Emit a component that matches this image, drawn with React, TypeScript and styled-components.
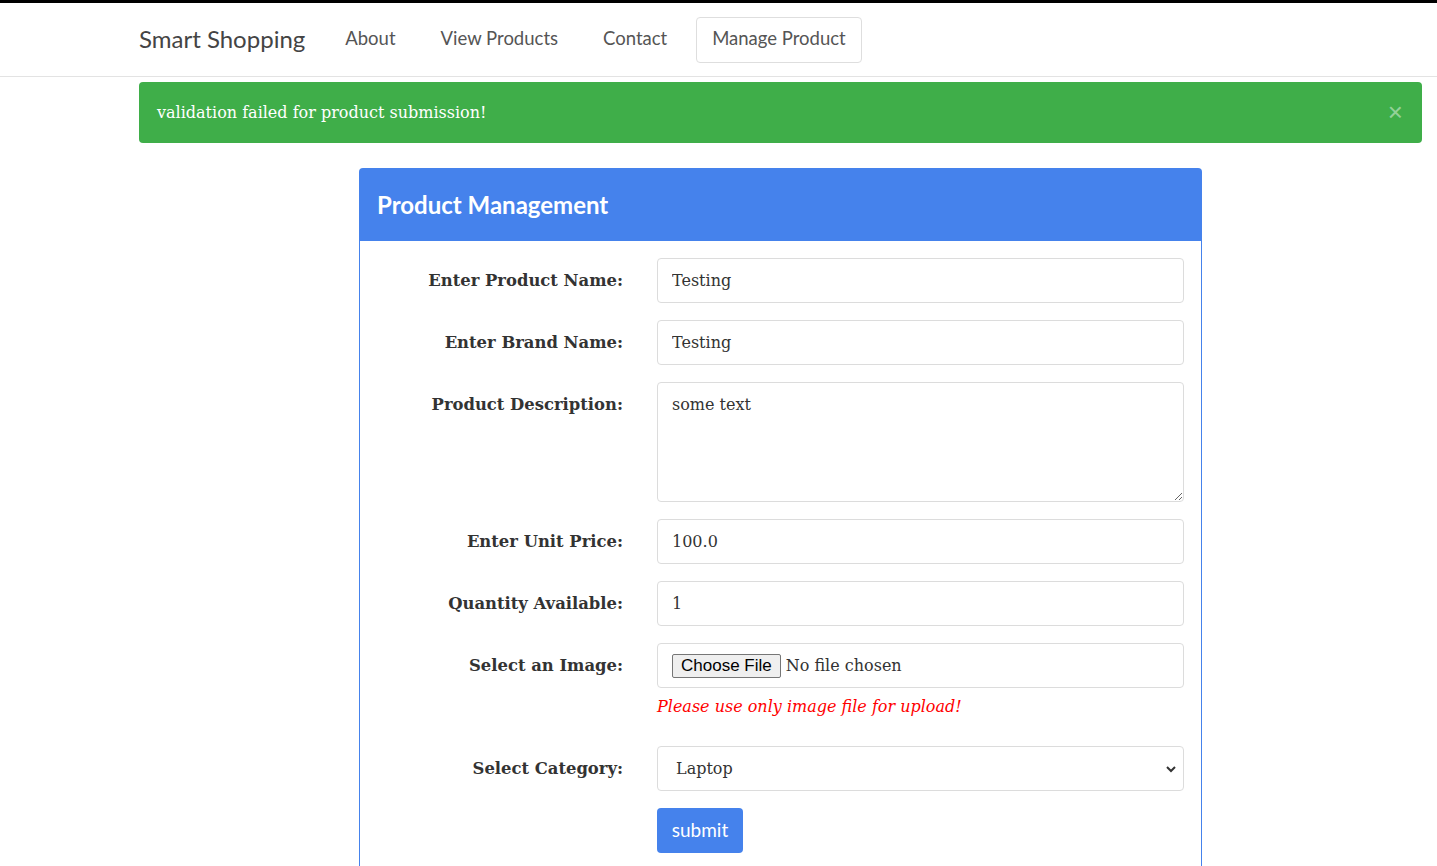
import styled, { createGlobalStyle } from "styled-components";

const serif = `"DejaVu Serif", Georgia, serif`;

const GlobalStyle = createGlobalStyle`
  body {
    margin: 0;
    background: #fff;
    font-family: ${serif};
    color: #333;
    overflow: hidden;
  }
`;

const TopLine = styled.div`
  height: 3px;
  background: #000;
`;

const NavbarRoot = styled.nav`
  display: flex;
  align-items: center;
  height: 73px;
  padding-left: 139px;
  border-bottom: 1px solid #e3e3e3;
  font-family: Lato, "Open Sans", sans-serif;
`;

const Brand = styled.div`
  font-size: 24px;
  color: #444;
  margin-bottom: 3px;
  margin-right: 24px;
`;

const NavLinks = styled.div`
  display: flex;
  align-items: center;
  gap: 13px;
`;

const NavLink = styled.div<{ $active?: boolean }>`
  font-size: 18.5px;
  color: #555;
  padding: 0 15px 3px;
  height: 41px;
  display: flex;
  align-items: center;
  border: 1px solid ${(p) => (p.$active ? "#dedede" : "transparent")};
  border-radius: 4px;
`;

const Alert = styled.div`
  display: flex;
  align-items: center;
  justify-content: space-between;
  height: 61px;
  margin: 5px 15px 0 139px;
  padding: 0 18px;
  background: #3fae49;
  color: #fff;
  border-radius: 4px;
  font-size: 16px;
`;

const CloseBtn = styled.span`
  font-family: "Liberation Sans", sans-serif;
  font-size: 26px;
  color: rgba(255, 255, 255, 0.45);
  margin-right: 1px;
`;

const Card = styled.div`
  width: 843px;
  margin: 25px 0 0 359px;
  box-sizing: border-box;
`;

const CardHeader = styled.div`
  height: 73px;
  display: flex;
  align-items: center;
  padding: 0 18px;
  background: #4582ec;
  color: #fff;
  font-family: Lato, "Open Sans", sans-serif;
  font-weight: 700;
  font-size: 24px;
  border-radius: 4px 4px 0 0;
`;

const CardBody = styled.div`
  border-left: 1px solid #4582ec;
  border-right: 1px solid #4582ec;
  padding: 17px 17px 40px 18px;
  display: grid;
  grid-template-columns: 245px 527px;
  column-gap: 34px;
  row-gap: 17px;
`;

const Label = styled.label`
  text-align: right;
  font-weight: 700;
  font-size: 16.4px;
  line-height: 45px;
  color: #333;
`;

const Field = styled.div`
  display: flex;
  flex-direction: column;
`;

const TextInput = styled.input`
  box-sizing: border-box;
  height: 45px;
  width: 100%;
  padding: 0 14px;
  border: 1px solid #dcdcdc;
  border-radius: 4px;
  font-family: ${serif};
  font-size: 16px;
  color: #333;
  outline: none;
`;

const TextArea = styled.textarea`
  box-sizing: border-box;
  height: 120px;
  width: 100%;
  padding: 11px 14px;
  border: 1px solid #dcdcdc;
  border-radius: 4px;
  font-family: ${serif};
  font-size: 16px;
  line-height: 22px;
  color: #333;
  outline: none;
`;

const FileBox = styled.div`
  box-sizing: border-box;
  height: 45px;
  display: flex;
  align-items: center;
  padding: 0 14px;
  border: 1px solid #dcdcdc;
  border-radius: 4px;

  input {
    font-family: ${serif};
    font-size: 16px;
    color: #333;
  }

  input::file-selector-button {
    font-family: "Liberation Sans", Arial, sans-serif;
    font-size: 17px;
    color: #000;
    background: #efefef;
    border: 1px solid #767676;
    border-radius: 2px;
    padding: 1px 8px;
    margin-right: 5px;
  }
`;

const ErrorText = styled.div`
  font-style: italic;
  color: #f00;
  font-size: 16px;
  line-height: 27px;
  margin-top: 5px;
  margin-bottom: 9px;
`;

const SelectBox = styled.div`
  position: relative;
  height: 45px;
`;

const Select = styled.select`
  box-sizing: border-box;
  height: 45px;
  width: 100%;
  padding: 0 18px;
  border: 1px solid #dcdcdc;
  border-radius: 4px;
  font-family: ${serif};
  font-size: 16px;
  color: #333;
  background: #fff;
  appearance: none;
  outline: none;
`;

const Chevron = styled.svg`
  position: absolute;
  right: 7px;
  top: 17px;
  pointer-events: none;
`;

const SubmitButton = styled.button`
  width: 86px;
  height: 45px;
  padding: 0 0 2px;
  border: none;
  border-radius: 4px;
  background: #4582ec;
  color: #fff;
  font-family: Lato, "Open Sans", sans-serif;
  font-size: 19px;
`;

function App() {
  return (
    <>
      <GlobalStyle />
      <TopLine />
      <NavbarRoot>
        <Brand>Smart Shopping</Brand>
        <NavLinks>
          <NavLink>About</NavLink>
          <NavLink>View Products</NavLink>
          <NavLink>Contact</NavLink>
          <NavLink $active>Manage Product</NavLink>
        </NavLinks>
      </NavbarRoot>

      <Alert>
        <span>validation failed for product submission!</span>
        <CloseBtn>×</CloseBtn>
      </Alert>

      <Card>
        <CardHeader>Product Management</CardHeader>
        <CardBody>
          <Label>Enter Product Name:</Label>
          <TextInput defaultValue="Testing" />

          <Label>Enter Brand Name:</Label>
          <TextInput defaultValue="Testing" />

          <Label>Product Description:</Label>
          <TextArea defaultValue="some text" />

          <Label>Enter Unit Price:</Label>
          <TextInput defaultValue="100.0" />

          <Label>Quantity Available:</Label>
          <TextInput defaultValue="1" />

          <Label>Select an Image:</Label>
          <Field>
            <FileBox>
              <input type="file" />
            </FileBox>
            <ErrorText>Please use only image file for upload!</ErrorText>
          </Field>

          <Label>Select Category:</Label>
          <SelectBox>
            <Select defaultValue="Laptop">
              <option>Laptop</option>
              <option>Mobile</option>
            </Select>
            <Chevron width="12" height="12" viewBox="0 0 12 12">
              <path d="M2 4l4 4 4-4" fill="none" stroke="#333" strokeWidth="2" />
            </Chevron>
          </SelectBox>

          <div />
          <div>
            <SubmitButton>submit</SubmitButton>
          </div>
        </CardBody>
      </Card>
    </>
  );
}

export default App;
